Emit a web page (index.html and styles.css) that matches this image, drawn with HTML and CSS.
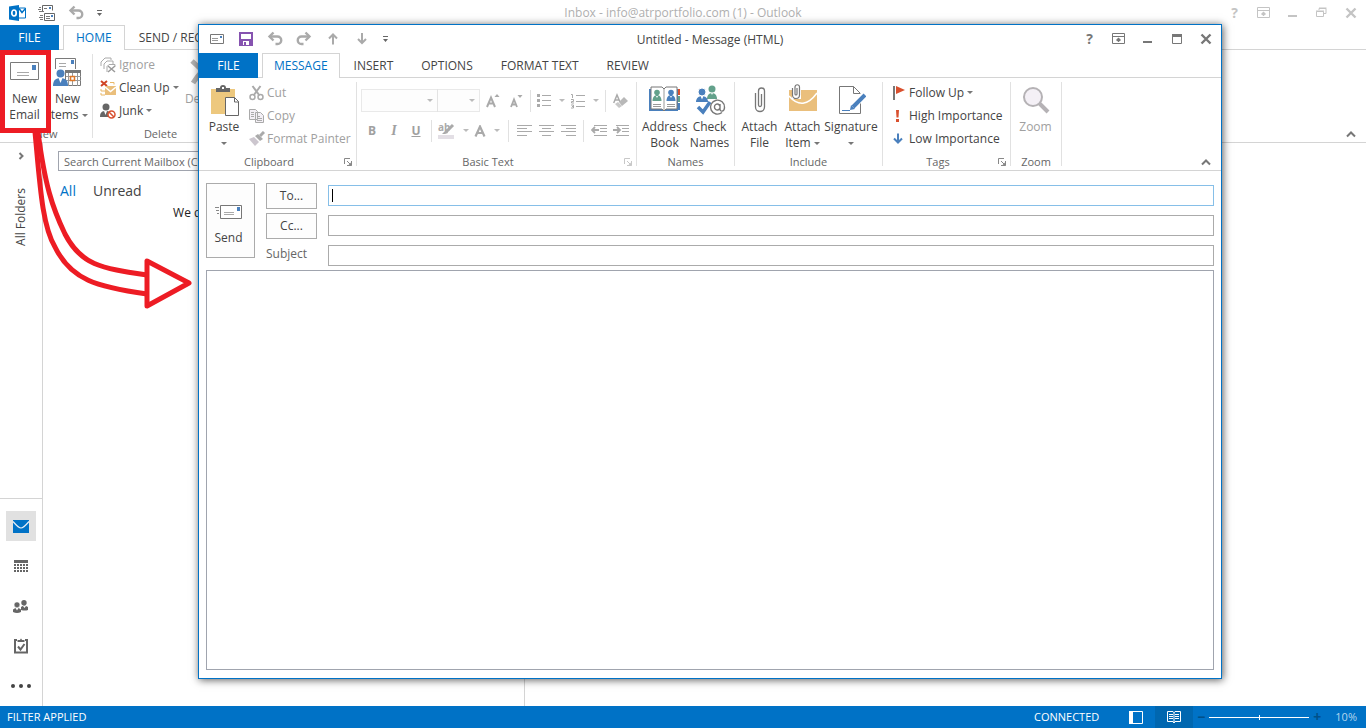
FILE: index.html
```html
<!DOCTYPE html>
<html lang="en">
<head>
<meta charset="utf-8">
<title>Inbox - Outlook</title>
<link rel="stylesheet" href="styles.css">
</head>
<body>
<svg class="defs" aria-hidden="true">
  <symbol id="i-undo" viewBox="0 0 16 16"><path d="M2.500 5.500H10.500a3.500 3.500 0 0 1 0 7.500H8.500" fill="none" stroke="currentColor" stroke-width="2.400"/><path d="M6.500 1.500 2.500 5.500 6.500 9.500" fill="none" stroke="currentColor" stroke-width="2.400"/></symbol>
  <symbol id="i-more" viewBox="0 0 7 8"><path d="M1 1h5v1H1zM1 4h5L3.500 7z" fill="currentColor"/></symbol>
  <symbol id="i-ribbon" viewBox="0 0 14 12"><path d="M.5.5h12v10H.5zM0 3.500h13" fill="none" stroke="currentColor"/><path d="M6.500 9V5M4.500 7.500l2-2 2 2" fill="none" stroke="currentColor" stroke-width="1.500"/></symbol>
  <symbol id="i-close" viewBox="0 0 12 12"><path d="M1.500 1.500l9 9M10.500 1.500l-9 9" stroke="currentColor" stroke-width="2.400"/></symbol>
  <symbol id="i-up" viewBox="0 0 10 7"><path d="M1 5.500 5 1.500l4 4" fill="none" stroke="currentColor" stroke-width="2"/></symbol>
  <symbol id="i-launch" viewBox="0 0 8 8"><path d="M.5 6V.5H6" fill="none" stroke="currentColor"/><path d="M3 3l4 4M7.500 3v4.500H3" fill="none" stroke="currentColor"/><path d="M7.500 4v4h-4z" fill="currentColor"/></symbol>
  <symbol id="i-mail" viewBox="0 0 30 20"><path d="M.5.500h28v17H.5z" fill="#fff" stroke="#7a7a7a"/><path d="M7 10.500h12M7 13.500h12" stroke="#a8a8a8"/><path d="M22 3h4v5h-4z" fill="#4a80bd"/></symbol>
</svg>

<div class="app">
  <header class="titlebar titlebar-main">
    <div class="quick">
      <button class="tool" aria-label="Outlook"><svg width="17" height="18" viewBox="0 0 17 18"><path d="M10 4h6.500v10H10" fill="#fff" stroke="#0072c6"/><path d="M10 4.500l3 4 3.500-4" fill="none" stroke="#0072c6" stroke-width="1.500"/><path d="M0 2.500 10 1v16L0 15.500z" fill="#0072c6"/><ellipse cx="5" cy="9" rx="2.200" ry="3" fill="none" stroke="#fff" stroke-width="1.700"/></svg></button>
      <button class="tool" aria-label="Send and receive all"><svg width="17" height="16" viewBox="0 0 17 16"><path d="M4.500 6V.5h10v5M6.500 8.500h10v7h-10z" fill="none" stroke="#666"/><path d="M11 2h2v2h-2zM13 10h2v2h-2z" fill="#4a80bd"/><path d="M1 2.500h2M0 4.500h3M1 6.500h5M2 10.500h3M1 12.500h4M2 14.500h3M8 11.500h4M8 13.500h4M6 3.500h3" stroke="#777"/></svg></button>
      <button class="tool dim" aria-label="Undo"><svg width="16" height="16"><use href="#i-undo"/></svg></button>
      <button class="tool narrow" aria-label="Customize"><svg width="7" height="8"><use href="#i-more"/></svg></button>
    </div>
    <h1 class="caption">Inbox - info@atrportfolio.com (1) - Outlook</h1>
    <div class="controls">
      <button class="tool help" aria-label="Help">?</button>
      <button class="tool" aria-label="Ribbon display"><svg width="14" height="12"><use href="#i-ribbon"/></svg></button>
      <button class="tool" aria-label="Minimize"><svg width="9" height="8"><path d="M0 6h9v2H0z" fill="currentColor"/></svg></button>
      <button class="tool" aria-label="Restore"><svg width="11" height="11" viewBox="0 0 11 11"><path d="M.5 4.500h7v5h-7zM3 3V1.500h7v5H8M0 4h8M3 1h7.500" fill="none" stroke="currentColor"/></svg></button>
      <button class="tool" aria-label="Close"><svg width="12" height="12"><use href="#i-close"/></svg></button>
    </div>
  </header>
  <nav class="tabs">
    <button class="tab file">FILE</button>
    <button class="tab active">HOME</button>
    <button class="tab">SEND / RECEIVE</button>
  </nav>
  <section class="ribbon">
    <div class="group g-new">
      <div class="group-body">
        <button class="big"><span class="pic"><svg width="30" height="20"><use href="#i-mail"/></svg></span>New<br>Email</button>
        <button class="big"><span class="pic"><svg width="30" height="32" viewBox="0 0 30 32"><path d="M2.500 13V2.500h20V13" fill="#fff" stroke="#7a7a7a"/><path d="M6 7.500h7M6 10.500h7" stroke="#a8a8a8"/><path d="M18 4h3v4h-3z" fill="#4a80bd"/><path d="M12.500 14.500h15v15h-15z" fill="#fff" stroke="#777"/><path d="M12 14h16v3H12z" fill="#777"/><path d="M13 20.500h15M13 24.500h15M15.500 17v13M19.500 17v13M24.500 17v13" stroke="#999"/><path d="M17.500 20.500h4v4h-4z" fill="#fff" stroke="#e07828" stroke-width="1.500"/><circle cx="7.500" cy="17.500" r="4" fill="#4a80bd"/><path d="M0 30c0-6 3-8 7.500-8s7.500 2 7.500 8z" fill="#4a80bd"/><path d="M5.500 22h4l-2 5z" fill="#fff"/></svg></span>New<br>Items <i class="caret"></i></button>
      </div>
      <h2 class="group-name">New</h2>
    </div>
    <div class="group g-delete">
      <div class="group-body">
        <div class="stack">
          <button class="small" disabled><svg width="16" height="16" viewBox="0 0 16 16"><path d="M1 9V5l4-4h6v2M4 12V7l3-3h6v3M7 15V9.500L9 7.500h6v2" fill="none" stroke="#aaa"/><path d="M8 9l7 6M15 9l-7 6" stroke="#999" stroke-width="1.500"/></svg>Ignore</button>
          <button class="small"><svg width="16" height="16" viewBox="0 0 16 16"><path d="M1 1l6 5M7 1 1 6" stroke="#d04526" stroke-width="2"/><path d="M10 2.500h4v2M1 9v2h4M1 13v2h4" fill="none" stroke="#e9b96a"/><path d="M5 6h11v9H5z" fill="#eabf7c"/><path d="M5 7l5.500 4.500L16 7" fill="none" stroke="#fff" stroke-width="1.500"/></svg>Clean Up <i class="caret"></i></button>
          <button class="small"><svg width="16" height="16" viewBox="0 0 16 16"><circle cx="6" cy="4" r="3.500" fill="#666"/><path d="M0 14c0-5 2-6 6-6 3 0 5 1 5 4l-3 2z" fill="#666"/><path d="M4 8h3l-1.500 4z" fill="#fff"/><circle cx="11.500" cy="11.500" r="3.500" fill="#fff" stroke="#d9502e" stroke-width="1.500"/><path d="M9 9l5 5" stroke="#d9502e" stroke-width="1.500"/></svg>Junk <i class="caret"></i></button>
        </div>
        <button class="big" disabled><span class="pic"><svg width="28" height="28" viewBox="0 0 28 28"><path d="M3 3q9 8 22 22M25 3Q12 12 4 25" fill="none" stroke="#b2b2b2" stroke-width="5"/></svg></span>Delete</button>
      </div>
      <h2 class="group-name">Delete</h2>
    </div>
    <button class="collapse" aria-label="Collapse ribbon"><svg width="10" height="7"><use href="#i-up"/></svg></button>
  </section>
  <main class="workspace">
    <aside class="side">
      <button class="expand" aria-label="Expand folder pane"><svg width="6" height="8" viewBox="0 0 6 8"><path d="M1.500 1l3 3-3 3" fill="none" stroke="#777" stroke-width="2"/></svg></button>
      <span class="folders">All Folders</span>
      <nav class="modules">
        <button class="module on" aria-label="Mail"><svg width="16" height="13" viewBox="0 0 16 13"><path d="M0 0h16v13H0z" fill="#0072c6"/><path d="M0 1.500C3 5 6 8 8 8s5-3 8-6.500" fill="none" stroke="#e6eef6" stroke-width="1.200"/></svg></button>
        <button class="module" aria-label="Calendar"><svg width="14" height="12" viewBox="0 0 14 12"><path d="M0 0h14v3H0z" fill="#666"/><path d="M0 5h14M0 8h14M0 11h14" stroke="#666" stroke-width="2" stroke-dasharray="2 1"/></svg></button>
        <button class="module" aria-label="People"><svg width="16" height="13" viewBox="0 0 16 13"><g fill="#666"><circle cx="11" cy="2.800" r="2.700"/><path d="M8 10V7q3-3 7 0v3q-3 1-7 0z"/><circle cx="4" cy="4.800" r="2.900" stroke="#fff" stroke-width=".5"/><path d="M0 12V9.500Q4 6 8 9.500V12q-4 2-8 0z"/></g><path d="M2.500 8h3L4 10.500zM10 6h3l-1.500 2z" fill="#fff"/></svg></button>
        <button class="module" aria-label="Tasks"><svg width="14" height="16" viewBox="0 0 14 16"><path d="M3 2H1v12.500h12V2h-2" fill="none" stroke="#666" stroke-width="2"/><path d="M3.500 4V2H6q1-3 2 0h2.500v2z" fill="#666"/><path d="M4 8.500l2.500 3L10.500 6" fill="none" stroke="#666" stroke-width="2"/></svg></button>
        <button class="module" aria-label="More"><svg width="20" height="4" viewBox="0 0 20 4"><g fill="#444"><circle cx="2" cy="2" r="2"/><circle cx="10" cy="2" r="2"/><circle cx="18" cy="2" r="2"/></g></svg></button>
      </nav>
    </aside>
    <section class="list">
      <input class="search" type="search" aria-label="Search" placeholder="Search Current Mailbox (Ctrl+E)">
      <div class="filters"><button class="filter on">All</button><button class="filter">Unread</button></div>
      <p class="empty">We didn't find anything to show here.</p>
    </section>
    <section class="reading"></section>
  </main>
  <footer class="status">
    <span class="status-left">FILTER APPLIED</span>
    <span class="connected">CONNECTED</span>
    <button class="view" aria-label="Normal view"><svg width="14" height="13" viewBox="0 0 14 13"><path d="M.5.500h13v12H.5z" fill="none" stroke="#fff"/><path d="M0 0h4v13H0z" fill="#fff"/></svg></button>
    <button class="view on" aria-label="Reading view"><svg width="14" height="13" viewBox="0 0 14 13"><path d="M.5.500h5.500L7 1.500 8 .5h5.500v10H8L7 12 6 10.500H.5zM7 1v11M2 3.500h4M2 5.500h4M2 7.500h4M8 3.500h4M8 5.500h4M8 7.500h4" fill="none" stroke="#fff"/></svg></button>
    <div class="zoom"><span class="sign">−</span><div class="track"></div><span class="sign">+</span></div>
    <span class="percent">10%</span>
  </footer>
</div>

<svg class="callout" width="200" height="320" viewBox="0 0 200 320" aria-hidden="true">
  <g fill="none" stroke="#ed1c24" stroke-width="5">
    <path d="M2.500 52.500h46v78h-46z"/>
    <path d="M35 132C40 185 42 225 55 247C71 280 97 287 147 294"/>
    <path d="M38 132C45 185 52 207 65 234C81 265 100 268 147 275"/>
    <path d="M147 261v45l42-23z" stroke-linejoin="round"/>
  </g>
</svg>

<div class="message" role="dialog" aria-label="Untitled - Message">
  <header class="titlebar">
    <div class="quick">
      <button class="tool" aria-label="Message"><svg width="14" height="11" viewBox="0 0 14 11"><path d="M.5.500h13v9H.5z" fill="#fff" stroke="#777"/><path d="M2 4.500h6M2 6.500h6" stroke="#999"/><path d="M10 2h2v2h-2z" fill="#4a80bd"/></svg></button>
      <button class="tool" aria-label="Save"><svg width="14" height="14" viewBox="0 0 14 14"><path d="M1 1h12v12H1z" fill="#fff" stroke="#8653b0" stroke-width="2"/><path d="M2 7h10v6H2z" fill="#8653b0"/><path d="M4 9h6v4H4z" fill="#fff"/><path d="M5 10h2v3H5z" fill="#8653b0"/></svg></button>
      <button class="tool dim" aria-label="Undo"><svg width="16" height="16"><use href="#i-undo"/></svg></button>
      <button class="tool dim" aria-label="Redo"><svg class="flip" width="16" height="16"><use href="#i-undo"/></svg></button>
      <button class="tool dim" aria-label="Previous"><svg width="10" height="12" viewBox="0 0 10 12"><path d="M5 11.500V2M1 5.500l4-4 4 4" fill="none" stroke="currentColor" stroke-width="2"/></svg></button>
      <button class="tool dim" aria-label="Next"><svg width="10" height="12" viewBox="0 0 10 12"><path d="M5 0v9.500M1 6l4 4 4-4" fill="none" stroke="currentColor" stroke-width="2"/></svg></button>
      <button class="tool narrow" aria-label="Customize"><svg width="7" height="8"><use href="#i-more"/></svg></button>
    </div>
    <h1 class="caption">Untitled - Message (HTML)</h1>
    <div class="controls">
      <button class="tool help" aria-label="Help">?</button>
      <button class="tool" aria-label="Ribbon display"><svg width="14" height="12"><use href="#i-ribbon"/></svg></button>
      <button class="tool" aria-label="Minimize"><svg width="9" height="8"><path d="M0 6h9v2H0z" fill="currentColor"/></svg></button>
      <button class="tool" aria-label="Maximize"><svg width="10" height="10" viewBox="0 0 10 10"><path d="M.5.500h9v9h-9z" fill="none" stroke="currentColor"/><path d="M0 0h10v3H0z" fill="currentColor"/></svg></button>
      <button class="tool" aria-label="Close"><svg width="12" height="12"><use href="#i-close"/></svg></button>
    </div>
  </header>
  <nav class="tabs">
    <button class="tab file">FILE</button>
    <button class="tab active">MESSAGE</button>
    <button class="tab">INSERT</button>
    <button class="tab">OPTIONS</button>
    <button class="tab">FORMAT TEXT</button>
    <button class="tab">REVIEW</button>
  </nav>
  <section class="ribbon">
    <div class="group g-clip">
      <div class="group-body">
        <button class="big"><span class="pic"><svg width="30" height="32" viewBox="0 0 30 32"><path d="M2 5h24v25H2z" fill="#edc87e"/><path d="M7 8V4h4q0-3 3-3t3 3h4v4z" fill="#666"/><path d="M13 3h2v2h-2z" fill="#fff"/><path d="M16.500 13.500h9l4 4v14h-13z" fill="#fff" stroke="#666"/><path d="M25.500 13.500v4.500H30" fill="none" stroke="#666"/></svg></span>Paste<br><i class="caret"></i></button>
        <div class="stack">
          <button class="small" disabled><svg width="16" height="16" viewBox="0 0 16 16"><path d="M3.500 1l7 9.500M11.500 1l-7 9.500" stroke="#aaa" stroke-width="2"/><circle cx="3.500" cy="12" r="2.500" fill="none" stroke="#aaa" stroke-width="1.500"/><circle cx="11.500" cy="12" r="2.500" fill="none" stroke="#aaa" stroke-width="1.500"/></svg>Cut</button>
          <button class="small" disabled><svg width="16" height="16" viewBox="0 0 16 16"><path d="M.5 1.500h6l2 2v8h-8zM6.500 4.500h5l3 3v7h-8z" fill="#f3eff5" stroke="#aaa"/><path d="M2 4.500h3M2 6.500h3M2 8.500h3M8 8.500h3M8 10.500h5M8 12.500h5" stroke="#aaa"/></svg>Copy</button>
          <button class="small" disabled><svg width="16" height="16" viewBox="0 0 16 16"><path d="M15 1l-4 4" stroke="#aaa" stroke-width="3"/><path d="M6 5l3-2 5 5-3 2z" fill="#aaa"/><path d="M0 8l5-2 5 5-4 4z" fill="#ccc6ce"/></svg>Format Painter</button>
        </div>
      </div>
      <h2 class="group-name">Clipboard</h2>
      <button class="launch" aria-label="Clipboard options"><svg width="8" height="8"><use href="#i-launch"/></svg></button>
    </div>
    <div class="group g-text">
      <div class="format">
        <div class="format-row">
          <span class="combo"><select class="font" aria-label="Font" disabled><option></option></select></span>
          <span class="combo"><select class="size" aria-label="Font size" disabled><option></option></select></span>
          <button class="fmt wide" disabled aria-label="Grow font"><svg width="14" height="16" viewBox="0 0 14 16"><path d="M1 14 5 4.500 9 14M2.500 10.500h5" fill="none" stroke="#aaa" stroke-width="2"/><path d="M8.500 4h5L11 1z" fill="#aaa"/></svg></button>
          <button class="fmt" disabled aria-label="Shrink font"><svg width="14" height="16" viewBox="0 0 14 16"><path d="M2 14 5 6.500 8 14M3 11.500h4" fill="none" stroke="#aaa" stroke-width="1.800"/><path d="M8.500 2h5L11 5z" fill="#aaa"/></svg></button>
          <i class="rule"></i>
          <button class="fmt drop" disabled aria-label="Bullets"><svg width="14" height="15" viewBox="0 0 14 15"><path d="M0 1h3v3H0zM0 6h3v3H0zM0 11h3v3H0z" fill="#aaa"/><path d="M5 2.500h9M5 7.500h9M5 12.500h9" stroke="#aaa"/></svg><i class="caret"></i></button>
          <button class="fmt drop" disabled aria-label="Numbering"><svg width="14" height="16" viewBox="0 0 14 16"><path d="M0 1.500h1.500V5M0 6.500h2.500v2H.5v1.500H3M0 12h2.500v3H0M1 13.500h1.500" fill="none" stroke="#aaa"/><path d="M5 2.500h9M5 8.500h9M5 13.500h9" stroke="#aaa"/></svg><i class="caret"></i></button>
          <i class="rule"></i>
          <button class="fmt" disabled aria-label="Clear formatting"><svg width="15" height="16" viewBox="0 0 15 16"><path d="M.7 10 4 2l3 7M2 7h4" fill="none" stroke="#aaa" stroke-width="1.500"/><path d="M6 9l5-5 4 4-6 5z" fill="#b8b8b8"/><path d="M2 11l3-2 4 4-3 2z" fill="#c8c8c8"/></svg></button>
        </div>
        <div class="format-row styles">
          <button class="fmt letter" disabled>B</button>
          <button class="fmt letter italic" disabled>I</button>
          <button class="fmt letter under" disabled>U</button>
          <i class="rule"></i>
          <button class="fmt drop" disabled aria-label="Highlight"><svg width="17" height="17" viewBox="0 0 17 17"><path d="M0 13h16v4H0z" fill="#e3dfe5"/><text x="0" y="9" class="ab">ab</text><path d="M15 3 8 10" stroke="#aaa" stroke-width="3"/><path d="M4 12l4-4 2 3-3 1z" fill="#aaa"/></svg><i class="caret"></i></button>
          <button class="fmt drop" disabled aria-label="Font color"><svg width="12" height="12" viewBox="0 0 12 12"><path d="M1.500 11.500 6 1.500l4.500 10M3 8h6" fill="none" stroke="#aaa" stroke-width="2.200"/></svg><i class="caret"></i></button>
          <i class="rule"></i>
          <button class="fmt" disabled aria-label="Align left"><svg width="15" height="12" viewBox="0 0 15 12"><path d="M0 .5h15M0 3.500h10M0 6.500h15M0 10.500h10" stroke="#aaa"/></svg></button>
          <button class="fmt" disabled aria-label="Center"><svg width="15" height="12" viewBox="0 0 15 12"><path d="M0 .5h15M3 3.500h9M0 6.500h15M3 10.500h9" stroke="#aaa"/></svg></button>
          <button class="fmt" disabled aria-label="Align right"><svg width="15" height="12" viewBox="0 0 15 12"><path d="M0 .5h15M5 3.500h10M0 6.500h15M5 10.500h10" stroke="#aaa"/></svg></button>
          <i class="rule"></i>
          <button class="fmt" disabled aria-label="Decrease indent"><svg width="16" height="12" viewBox="0 0 16 12"><path d="M3 .5h13M9 3.500h7M9 6.500h7M3 10.500h13" stroke="#aaa"/><path d="M8 5H1M4 2 1 5l3 3" fill="none" stroke="#aaa" stroke-width="1.800"/></svg></button>
          <button class="fmt" disabled aria-label="Increase indent"><svg width="16" height="12" viewBox="0 0 16 12"><path d="M3 .5h13M9 3.500h7M9 6.500h7M3 10.500h13" stroke="#aaa"/><path d="M0 5h7M4 2l3 3-3 3" fill="none" stroke="#aaa" stroke-width="1.800"/></svg></button>
        </div>
      </div>
      <h2 class="group-name">Basic Text</h2>
      <button class="launch faded" aria-label="Basic text options"><svg width="8" height="8"><use href="#i-launch"/></svg></button>
    </div>
    <div class="group g-names">
      <div class="group-body">
        <button class="big"><span class="pic"><svg width="32" height="32" viewBox="0 0 32 32"><path d="M28 5h3v6h-3z" fill="#d9502e"/><path d="M28 12h3v6h-3z" fill="#63a18b"/><path d="M28 19h3v7h-3z" fill="#4a80bd"/><path d="M0 5h29v22H0z" fill="#4a80bd"/><path d="M2 3h11l2 2 2-2h11v22H17l-2 2-2-2H2z" fill="#fff" stroke="#777"/><path d="M15 5v21M4 20.500h8M4 22.500h8M18 20.500h8M18 22.500h8" stroke="#999"/><circle cx="8" cy="8.500" r="2.800" fill="#63a18b"/><path d="M3.500 17c0-8 9-8 9 0z" fill="#63a18b"/><circle cx="22" cy="8.500" r="2.800" fill="#4a80bd"/><path d="M17.500 17c0-8 9-8 9 0z" fill="#4a80bd"/><path d="M7 12h2l-1 2zM21 12h2l-1 2z" fill="#fff"/></svg></span>Address<br>Book</button>
        <button class="big"><span class="pic"><svg width="32" height="32" viewBox="0 0 32 32"><circle cx="18" cy="5" r="3.500" fill="#63a18b"/><path d="M13 15c0-8 10-8 10 0z" fill="#63a18b"/><circle cx="8" cy="8" r="4" fill="#4a80bd" stroke="#fff"/><path d="M2 18c0-8 12-8 12 0z" fill="#4a80bd"/><path d="M6.500 12h3L8 15.500zM17 9h2l-1 2z" fill="#fff"/><path d="M4 23l5 5 7-10" fill="none" stroke="#4a80bd" stroke-width="3.500"/><circle cx="24" cy="23" r="7.500" fill="#fff"/><path d="M28 28.500a7 7 0 1 1 2.500-5c0 4-4.500 5-4.500 1.500V20M26 23.500a2.800 3 0 1 1 0-1" fill="none" stroke="#777" stroke-width="1.400"/></svg></span>Check<br>Names</button>
      </div>
      <h2 class="group-name">Names</h2>
    </div>
    <div class="group g-include">
      <div class="group-body">
        <button class="big"><span class="pic"><svg width="14" height="30" viewBox="0 0 14 30"><path d="M2.500 8v14a4.500 4.500 0 0 0 9 0V6a3 3 0 0 0-6 0v14a1.500 1.500 0 0 0 3 0V9" fill="none" stroke="#777" stroke-width="1.300"/></svg></span>Attach<br>File</button>
        <button class="big"><span class="pic"><svg width="30" height="32" viewBox="0 0 30 32"><path d="M1 6h28v21H1z" fill="#eabf7c"/><path d="M1 12q14 16 28-3" fill="none" stroke="#fff" stroke-width="1.500"/><path d="M4 1h9v14H4z" fill="#fff"/><path d="M4.500 4v7a3 3 0 0 0 7 0V3a2 2 0 0 0-4.500 0v7a1 1 0 0 0 2 0V4" fill="none" stroke="#777" stroke-width="1.200"/></svg></span>Attach<br>Item <i class="caret"></i></button>
        <button class="big sign-btn"><span class="pic"><svg width="30" height="32" viewBox="0 0 30 32"><path d="M3.500 2.500h14l7 7v20h-21z" fill="#fff" stroke="#777"/><path d="M17.500 2.500V9.500h7" fill="none" stroke="#777"/><path d="M28 11 16 23" stroke="#fff" stroke-width="7"/><path d="M29 11 17 23" stroke="#4a80bd" stroke-width="4"/><path d="M15 21l4 4-5 1z" fill="#4a80bd"/><path d="M6 26.500h8" stroke="#4a80bd"/></svg></span>Signature<br><i class="caret"></i></button>
      </div>
      <h2 class="group-name">Include</h2>
    </div>
    <div class="group g-tags">
      <div class="group-body">
        <div class="stack">
          <button class="small"><svg width="13" height="16" viewBox="0 0 13 16"><path d="M0 1h2v14H0z" fill="#777"/><path d="M3 1l9 4-9 4z" fill="#d9502e"/></svg>Follow Up <i class="caret"></i></button>
          <button class="small"><svg width="13" height="16" viewBox="0 0 13 16"><path d="M3 2h3l-.5 7.500h-2zM3 11h3v3H3z" fill="#d9502e"/></svg>High Importance</button>
          <button class="small"><svg width="13" height="16" viewBox="0 0 13 16"><path d="M5 2.500v9M1 7.500l4 4 4-4" fill="none" stroke="#4a80bd" stroke-width="2"/></svg>Low Importance</button>
        </div>
      </div>
      <h2 class="group-name">Tags</h2>
      <button class="launch" aria-label="Tag options"><svg width="8" height="8"><use href="#i-launch"/></svg></button>
    </div>
    <div class="group g-zoom">
      <div class="group-body">
        <button class="big" disabled><span class="pic"><svg width="28" height="30" viewBox="0 0 28 30"><path d="M17 18l9 9" stroke="#b5b2b5" stroke-width="4"/><circle cx="11" cy="12" r="9" fill="#f4f0f6" stroke="#b5b2b5" stroke-width="2"/></svg></span>Zoom</button>
      </div>
      <h2 class="group-name">Zoom</h2>
    </div>
    <button class="collapse" aria-label="Collapse ribbon"><svg width="10" height="7"><use href="#i-up"/></svg></button>
  </section>
  <form class="compose">
    <div class="fields">
      <button class="send" type="button"><svg width="28" height="14" viewBox="0 0 28 14"><path d="M5.500.500h21v13h-21z" fill="#fff" stroke="#777"/><path d="M9 7.500h10M9 9.500h10" stroke="#aaa"/><path d="M22 2h3v4h-3z" fill="#4a80bd"/><path d="M0 2.500h4M1 5.500h3M2 8.500h2" stroke="#888"/></svg>Send</button>
      <button class="who" type="button">To...</button>
      <input class="field focused" type="text" aria-label="To">
      <button class="who" type="button">Cc...</button>
      <input class="field" type="text" aria-label="Cc">
      <label class="subject" for="subject">Subject</label>
      <input class="field" type="text" id="subject">
    </div>
    <textarea class="body" aria-label="Message body"></textarea>
  </form>
</div>
</body>
</html>
```
FILE: styles.css
```css
* { box-sizing: border-box; }
body {
  margin: 0;
  background: #fff;
  color: #444;
  font: 12px/16px "Open Sans", "Noto Sans", sans-serif;
}
button, input, select, textarea { font: inherit; color: inherit; margin: 0; }
button { background: none; border: 0; padding: 0; }
button:disabled { color: #a0a0a0; }
h1, h2, p { margin: 0; font-size: inherit; font-weight: 400; }
svg { flex: none; display: block; }
.defs { position: absolute; width: 0; height: 0; }
.app { display: flex; flex-direction: column; min-height: 100vh; }

.titlebar { display: grid; grid-template-columns: 1fr auto 1fr; height: 28px; align-items: center; }
.titlebar-main { height: 25px; }
.quick { display: flex; padding-left: 3px; }
.controls { display: flex; justify-content: flex-end; padding-right: 1px; color: #777; }
.titlebar-main .controls { color: #c4c4c4; }
.titlebar-main .caption { color: #b0b0b0; }
.caption { padding-top: 1px; white-space: nowrap; }
.tool { display: flex; width: 29px; height: 20px; align-items: center; justify-content: center; }
.quick .tool { color: #666; }
.quick .tool.dim { color: #aaa; }
.tool.narrow { width: 18px; }
.help { font-size: 14px; font-weight: 700; }

.tabs { display: flex; height: 25px; border-bottom: 1px solid #d4d4d4; }
.tab { height: 25px; padding: 1px 14px 0; white-space: nowrap; }
.tab.file { width: 59px; margin-right: 4px; background: #0072c6; color: #fff; }
.tab.active { padding: 0 11px; border: 1px solid #d4d4d4; border-bottom: 0; background: #fff; color: #0072c6; }
.app .tab.active { padding: 0 12px; }

.ribbon { position: relative; display: flex; height: 93px; border-bottom: 1px solid #d4d4d4; }
.group {
  position: relative;
  display: flex;
  flex-direction: column;
  background: linear-gradient(#e1e1e1, #e1e1e1) right 4px / 1px 84px no-repeat;
}
.group-body { display: flex; flex: 1; padding-top: 3px; }
.group-name { padding-right: 1px; font-size: 11px; line-height: 16px; text-align: center; color: #666; }
.g-clip .group-name, .g-text .group-name, .g-tags .group-name { padding-right: 18px; }
.g-new { width: 93px; }
.g-delete { width: 136px; }
.g-clip { width: 158px; }
.g-text { width: 280px; }
.g-names { width: 98px; }
.g-include { width: 148px; }
.g-tags { width: 128px; }
.g-zoom { width: 51px; }
.g-new .group-body { padding-left: 3px; }
.g-delete .group-body { padding-left: 7px; }
.g-clip .group-body { padding-left: 2px; }
.g-names .group-body { padding-left: 5px; }
.g-include .group-body { padding-left: 3px; }
.g-tags .group-body { padding-left: 10px; }
.g-zoom .group-body { padding-left: 3px; }

.big { display: block; width: 43px; white-space: nowrap; align-self: flex-start; }
.big.sign-btn { width: 54px; }
.pic { display: flex; height: 38px; align-items: center; justify-content: center; }
.g-names .big { width: 45px; }
.g-clip .big { width: 46px; margin-right: 2px; }
.g-delete .big { width: 38px; margin-left: 6px; }
.stack { display: flex; flex-direction: column; }
.small { display: flex; height: 23px; align-items: center; gap: 3px; white-space: nowrap; text-align: left; }
.g-clip .small { gap: 2px; }
.g-delete .stack { width: 78px; }
.caret {
  display: inline-block;
  border: 3px solid transparent;
  border-top-color: #777;
  border-bottom: 0;
  vertical-align: 2px;
}
.launch { position: absolute; right: 5px; bottom: 4px; color: #888; }
.launch.faded { color: #c8c8c8; }
.collapse { position: absolute; right: 10px; bottom: 4px; color: #777; }

.format { display: flex; flex: 1; flex-direction: column; gap: 7px; padding: 11px 0 0 4px; }
.format-row { display: flex; height: 23px; align-items: center; }
.combo { position: relative; display: flex; margin-right: -1px; }
.combo::after {
  content: "";
  position: absolute;
  right: 5px;
  top: 10px;
  border: 3px solid transparent;
  border-top-color: #bbb;
  border-bottom: 0;
}
.combo select { height: 23px; appearance: none; border: 1px solid #e1e1e1; border-radius: 0; background: #fdfdfd; }
.combo .font { width: 77px; }
.combo .size { width: 43px; }
.fmt { display: flex; width: 22px; height: 22px; align-items: center; justify-content: center; }
.fmt.wide { width: 24px; margin-left: 2px; }
.fmt.drop { width: 34px; gap: 8px; }
.fmt .caret { flex: none; border-top-color: #bbb; }
.letter { font-weight: 700; }
.italic { font-family: "Liberation Serif", serif; font-style: italic; font-size: 14px; }
.under { text-decoration: underline; }
.rule { width: 1px; height: 22px; margin: 0 3px; background: #e1e1e1; }
.styles .rule { margin: 0 4px; }
.ab { font: 700 10px "Open Sans", sans-serif; fill: #aaa; }

.workspace { display: flex; flex: 1; }
.side { display: flex; width: 43px; flex-direction: column; border-right: 1px solid #d4d4d4; }
.expand { display: flex; height: 26px; align-items: center; justify-content: center; }
.folders { align-self: center; margin-top: 19px; writing-mode: vertical-rl; transform: rotate(180deg); }
.modules { display: flex; flex-direction: column; align-items: center; gap: 10px; margin-top: auto; padding: 12px 0 5px; border-top: 1px solid #d4d4d4; }
.module { display: flex; width: 30px; height: 30px; align-items: center; justify-content: center; }
.module.on { background: #e1e1e1; }
.list { display: flex; width: 482px; flex-direction: column; padding: 8px 15px; border-right: 1px solid #d4d4d4; }
.search { height: 20px; padding: 0 5px; border: 1px solid #a0a4ae; border-radius: 0; appearance: none; font-size: 11px; }
.search::placeholder { color: #666; opacity: 1; }
.filters { display: flex; gap: 17px; margin: 10px 2px 4px; font-size: 14px; line-height: 20px; }
.filter.on { color: #0072c6; }
.empty { padding-right: 12px; text-align: center; color: #222; }
.reading { flex: 1; }

.status { display: flex; height: 22px; align-items: center; padding: 0 9px 0 7px; background: #0072c6; color: #fff; font-size: 11px; }
.status-left { flex: 1; }
.view { display: flex; width: 38px; height: 22px; align-items: center; justify-content: center; }
.connected { margin-right: 18px; }
.view.on { background: #0067b0; }
.zoom { display: flex; align-items: center; gap: 4px; margin: 0 14px 0 4px; color: #00508a; }
.sign { font-size: 14px; font-weight: 700; }
.track { width: 100px; height: 5px; background: linear-gradient(#fff, #fff) center / 100% 1px no-repeat, linear-gradient(#fff, #fff) center / 1px 5px no-repeat; }
.percent { color: #b5d6ee; }

.callout { position: absolute; left: 0; top: 0; pointer-events: none; }

.message {
  position: absolute;
  inset: 24px 144px 49px 198px;
  display: flex;
  flex-direction: column;
  border: 1px solid #0072c6;
  background: #fff;
  box-shadow: 1px 1px 8px rgba(0, 0, 0, .65);
}
.flip { transform: scaleX(-1); }
.compose { display: flex; flex: 1; flex-direction: column; padding: 12px 7px 8px; }
.fields { display: grid; grid-template-columns: 49px 51px 1fr; grid-auto-rows: 26px; gap: 4px 11px; align-items: start; margin-bottom: 1px; }
.send { display: flex; grid-row: span 3; height: 75px; flex-direction: column; align-items: center; justify-content: center; gap: 11px; padding: 9px 4px 0 0; border: 1px solid #ababab; background: #fdfdfd; }
.who { height: 26px; border: 1px solid #ababab; background: #fdfdfd; }
.subject { line-height: 22px; color: #666; }
.field { width: 100%; height: 21px; margin-top: 2px; padding: 0 4px; border: 1px solid #ababab; border-radius: 0; outline: 0; }
.field.focused { border-color: #86bfe8; background: linear-gradient(#000, #000) 3px 3px / 1px 13px no-repeat; }
.body { flex: 1; width: 100%; padding: 4px; border: 1px solid #a0a4ae; border-radius: 0; resize: none; }
```
